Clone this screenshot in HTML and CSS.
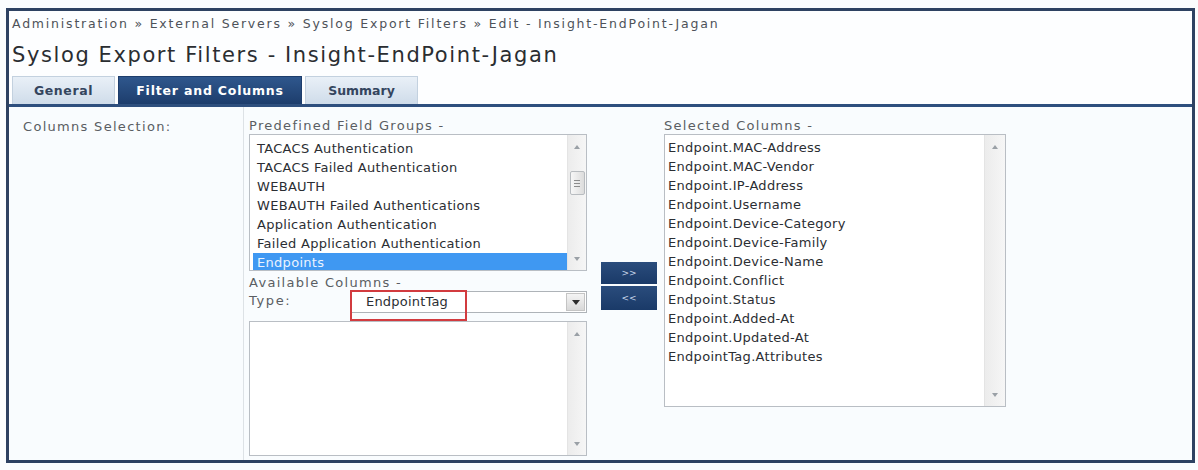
FILE: index.html
```html
<!DOCTYPE html>
<html lang="en">
<head>
    <meta charset="UTF-8">
    <title>Syslog Export Filters - Insight-EndPoint-Jagan</title>
    <link rel="stylesheet" href="styles.css">
</head>
<body>
    <div class="frame">
        <!-- Header -->
        <div class="header">
            <div class="breadcrumb">Administration &raquo; External Servers &raquo; Syslog Export Filters &raquo; Edit - Insight-EndPoint-Jagan</div>
            <h1 class="title">Syslog Export Filters - Insight-EndPoint-Jagan</h1>
        </div>

        <!-- Tabs -->
        <div class="tabs">
            <div class="tab tab-general">General</div>
            <div class="tab tab-active">Filter and Columns</div>
            <div class="tab tab-summary">Summary</div>
        </div>

        <!-- Content -->
        <div class="content">
            <div class="label-col">Columns Selection:</div>
            <div class="fields">
                <div class="col-left">
                    <div class="field-label">Predefined Field Groups -</div>
                    <div class="listbox groups">
                        <div class="list-items">
                            <div class="item">TACACS Authentication</div>
                            <div class="item">TACACS Failed Authentication</div>
                            <div class="item">WEBAUTH</div>
                            <div class="item">WEBAUTH Failed Authentications</div>
                            <div class="item">Application Authentication</div>
                            <div class="item">Failed Application Authentication</div>
                            <div class="item selected">Endpoints</div>
                        </div>
                        <div class="scrollbar">
                            <span class="arrow up"></span>
                            <span class="thumb"><span class="grip"></span></span>
                            <span class="arrow down"></span>
                        </div>
                    </div>
                    <div class="field-label avail">Available Columns -</div>
                    <div class="type-row">
                        <span class="type-label">Type:</span>
                        <div class="select">
                            <span class="select-value">EndpointTag</span>
                            <span class="select-btn"><span class="arrow down dark"></span></span>
                            <span class="highlight"></span>
                        </div>
                    </div>
                    <div class="listbox available">
                        <div class="list-items"></div>
                        <div class="scrollbar plain">
                            <span class="arrow up"></span>
                            <span class="arrow down"></span>
                        </div>
                    </div>
                </div>

                <div class="col-buttons">
                    <button class="move-btn">&gt;&gt;</button>
                    <button class="move-btn">&lt;&lt;</button>
                </div>

                <div class="col-right">
                    <div class="field-label">Selected Columns -</div>
                    <div class="listbox selected-cols">
                        <div class="list-items">
                            <div class="item">Endpoint.MAC-Address</div>
                            <div class="item">Endpoint.MAC-Vendor</div>
                            <div class="item">Endpoint.IP-Address</div>
                            <div class="item">Endpoint.Username</div>
                            <div class="item">Endpoint.Device-Category</div>
                            <div class="item">Endpoint.Device-Family</div>
                            <div class="item">Endpoint.Device-Name</div>
                            <div class="item">Endpoint.Conflict</div>
                            <div class="item">Endpoint.Status</div>
                            <div class="item">Endpoint.Added-At</div>
                            <div class="item">Endpoint.Updated-At</div>
                            <div class="item">EndpointTag.Attributes</div>
                        </div>
                        <div class="scrollbar plain">
                            <span class="arrow up"></span>
                            <span class="arrow down"></span>
                        </div>
                    </div>
                </div>
            </div>
        </div>
    </div>
</body>
</html>
```
FILE: styles.css
```css
/* Base */
body {
    margin: 0;
    background-color: #fbfdfe;
    font-family: "DejaVu Sans", Verdana, sans-serif;
    color: #333;
}

.frame {
    margin: 8px 3px 0 6px;
    height: 449px;
    border: 3px solid #2e4262;
    background-color: #fdfeff;
    display: flex;
    flex-direction: column;
}

/* Header */
.header {
    padding: 5px 0 0 3px;
}

.breadcrumb {
    font-size: 12.5px;
    letter-spacing: 1.8px;
    color: #4d5259;
    line-height: 16px;
    white-space: nowrap;
}

.title {
    margin: 10px 0 0;
    font-size: 21px;
    font-weight: normal;
    color: #2a2d31;
    line-height: 26px;
    letter-spacing: 1.6px;
    white-space: nowrap;
}

/* Tabs */
.tabs {
    display: flex;
    gap: 3px;
    margin-top: 8px;
    padding-left: 3px;
    border-bottom: 3px solid #2e4f7e;
}

.tab {
    height: 27px;
    line-height: 27px;
    font-size: 12.5px;
    font-weight: bold;
    letter-spacing: 0.6px;
    text-align: center;
    color: #34455e;
    background: linear-gradient(#e9f0f7, #cfdcea);
    border: 1px solid #c3d1df;
    border-bottom: none;
}

.tab-general {
    width: 101px;
}

.tab-active {
    width: 182px;
    letter-spacing: 0.8px;
    color: #fff;
    background: linear-gradient(#2f578d, #1d3d6c);
    border-color: #1d3d6c;
}

.tab-summary {
    width: 111px;
    letter-spacing: 0;
}

/* Content */
.content {
    flex: 1;
    display: flex;
    background-color: #f9fcfe;
}

.label-col {
    width: 220px;
    padding: 12px 0 0 14px;
    font-size: 13px;
    letter-spacing: 1.3px;
    color: #5a5e63;
    border-right: 1px solid #dde2e6;
}

.fields {
    display: flex;
    padding: 12px 0 0 5px;
}

.field-label {
    font-size: 13px;
    letter-spacing: 1.3px;
    color: #5a5e63;
    line-height: 14px;
    white-space: nowrap;
}

.col-left {
    width: 338px;
}

/* Listboxes */
.listbox {
    display: flex;
    background-color: #fff;
    border: 1px solid #b9bec4;
    overflow: hidden;
}

.list-items {
    flex: 1;
    padding: 3px 0 0 3px;
}

.item {
    height: 19px;
    line-height: 19px;
    padding-left: 4px;
    font-size: 13px;
    letter-spacing: 0.3px;
    color: #2b2e33;
    white-space: nowrap;
}

.item.selected {
    background-color: #3f98f2;
    color: #eaf3ff;
}

.groups {
    height: 135px;
    margin-top: 1px;
}

.groups .list-items {
    padding-top: 4px;
}

.available {
    height: 133px;
}

.selected-cols {
    height: 271px;
    margin-top: 1px;
}

.selected-cols .list-items {
    padding: 3px 0 0 0;
}

.selected-cols .item {
    padding-left: 3px;
}

/* Scrollbars */
.scrollbar {
    width: 18px;
    background: linear-gradient(90deg, #ececec, #f6f6f6);
    border-left: 1px solid #e4e4e4;
    display: flex;
    flex-direction: column;
    align-items: center;
    padding: 10px 0 9px;
}

.scrollbar.plain {
    justify-content: space-between;
}

.selected-cols .scrollbar {
    width: 20px;
}

.arrow {
    width: 0;
    height: 0;
    border-left: 3px solid transparent;
    border-right: 3px solid transparent;
}

.arrow.up {
    border-bottom: 4px solid #9aa0a6;
}

.arrow.down {
    border-top: 4px solid #9aa0a6;
}

.arrow.down.dark {
    border-left-width: 4px;
    border-right-width: 4px;
    border-top: 5px solid #2b2b2b;
}

.thumb {
    margin: 22px 0 auto;
    width: 13px;
    height: 22px;
    border: 1px solid #b8bcc0;
    border-radius: 2px;
    background: linear-gradient(90deg, #f7f7f7, #dcdcdc);
    display: flex;
    align-items: center;
    justify-content: center;
}

.grip {
    width: 6px;
    height: 5px;
    border-top: 1px solid #8c8c8c;
    border-bottom: 1px solid #8c8c8c;
    position: relative;
}

.grip::after {
    content: "";
    position: absolute;
    left: 0;
    right: 0;
    top: 2px;
    border-top: 1px solid #8c8c8c;
}

/* Available columns */
.avail {
    margin-top: 5px;
}

.type-row {
    display: flex;
    align-items: flex-start;
    margin-top: 1px;
    height: 30px;
}

.type-label {
    width: 102px;
    padding-top: 2px;
    font-size: 13px;
    letter-spacing: 1.6px;
    color: #5a5e63;
    line-height: 16px;
}

.select {
    flex: 1;
    position: relative;
    height: 20px;
    display: flex;
    background-color: #fff;
    border: 1px solid #aeb3b8;
}

.select-value {
    flex: 1;
    padding-left: 14px;
    line-height: 20px;
    font-size: 13px;
    letter-spacing: 0.2px;
    color: #2b2e33;
}

.select-btn {
    width: 17px;
    margin: 1px;
    background: linear-gradient(#f4f4f4, #d8d8d8);
    border: 1px solid #c4c4c4;
    display: flex;
    align-items: center;
    justify-content: center;
}

/* Red annotation box */
.highlight {
    position: absolute;
    left: -2px;
    top: -2px;
    width: 113px;
    height: 27px;
    border: 2px solid #d23b3f;
}

/* Move buttons */
.col-buttons {
    width: 56px;
    margin-left: 14px;
    padding-top: 143px;
    display: flex;
    flex-direction: column;
    gap: 2px;
}

.move-btn {
    height: 22px;
    padding: 0;
    border: none;
    font-family: "DejaVu Sans", sans-serif;
    font-size: 9px;
    color: #c8d6ea;
    background: linear-gradient(#2a4c7c, #1a3a68);
}

.move-btn + .move-btn {
    height: 24px;
}

.col-right {
    width: 342px;
    margin-left: 7px;
}
```
